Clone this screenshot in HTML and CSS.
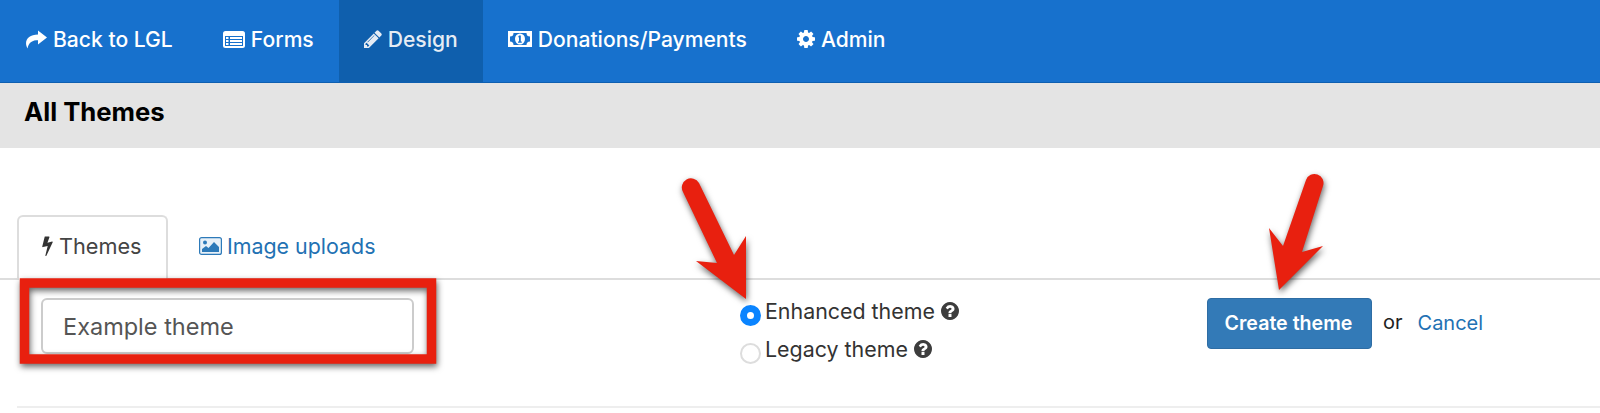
FILE: index.html
```html
<!DOCTYPE html>
<html lang="en">
<head>
    <meta charset="UTF-8">
    <title>All Themes</title>
    <link rel="stylesheet" href="styles.css">
</head>
<body>
    <nav class="topnav">
        <a class="nav-item" href="#">
            <svg class="nav-icon icon-share" viewBox="0 0 22 18"><path d="M13 0l9 7-9 7v-4.200C7.500 9.800 3.800 11.500 2.500 18-1.500 10.500 3 4.300 13 4z"/></svg>
            Back to LGL
        </a>
        <a class="nav-item" href="#">
            <svg class="nav-icon icon-wide" viewBox="0 0 22 17"><rect width="22" height="17" rx="2.500"/><path class="cut" d="M2 5h18v10H2z"/><path d="M3 6h2.500v2H3zM3 9h2.500v2H3zM3 12h2.500v2H3zM7 6h12v2H7zM7 9h12v2H7zM7 12h12v2H7z"/></svg>
            Forms
        </a>
        <a class="nav-item active" href="#">
            <svg class="nav-icon icon-square" viewBox="0 0 1536 1536"><path d="M363 1408l91-91-235-235-91 91v107h128v128h107zm523-928q0-22-22-22-10 0-17 7l-542 542q-7 7-7 17 0 22 22 22 10 0 17-7l542-542q7-7 7-17zm-54-192l416 416-832 832h-416v-416zm683 96q0 53-37 90l-166 166-416-416 166-165q36-38 90-38 53 0 91 38l235 234q37 39 37 91z"/></svg>
            Design
        </a>
        <a class="nav-item" href="#">
            <svg class="nav-icon icon-money" viewBox="0 0 24 16"><rect width="24" height="16"/><path class="cut" d="M2 2h20v12H2z"/><path d="M2 2h3.500A3.500 3.500 0 0 1 2 5.500zM22 2v3.500A3.500 3.500 0 0 1 18.500 2zM2 14v-3.500A3.500 3.500 0 0 1 5.500 14zM22 14h-3.500a3.500 3.500 0 0 1 3.500-3.500z"/><ellipse cx="12" cy="8" rx="5" ry="5.500"/><path class="cut" d="M11 4.500h1.800v6h1v1.200H10v-1.200h1V6.200h-1z"/></svg>
            Donations/Payments
        </a>
        <a class="nav-item" href="#">
            <svg class="nav-icon icon-square" viewBox="0 -128 1536 1536"><path d="M1024 640q0-106-75-181t-181-75-181 75-75 181 75 181 181 75 181-75 75-181zm512-109v222q0 12-8 23t-20 13l-185 28q-19 54-39 91 35 50 107 138 10 12 10 25t-9 23q-27 37-99 108t-94 71q-12 0-26-9l-138-108q-44 23-91 38-16 136-29 186-7 28-36 28h-222q-14 0-24.500-8.500t-11.500-21.500l-28-184q-49-16-90-37l-141 107q-10 9-25 9-14 0-25-11-126-114-165-168-7-10-7-23 0-12 8-23 15-21 51-66.500t54-70.500q-27-50-41-99l-183-27q-13-2-21-12.500t-8-23.500v-222q0-12 8-23t19-13l186-28q14-46 39-92-40-57-107-138-10-12-10-24 0-10 9-23 26-36 98.500-107.500t94.500-71.500q13 0 26 10l138 107q44-23 91-38 16-136 29-186 7-28 36-28h222q14 0 24.500 8.500t11.500 21.500l28 184q49 16 90 37l142-107q9-9 24-9 13 0 25 10 129 119 165 170 7 8 7 22 0 12-8 23-15 21-51 66.500t-54 70.500q26 50 41 98l183 28q13 2 21 12.500t8 23.500z"/></svg>
            Admin
        </a>
    </nav>

    <header class="page-title">
        <h1>All Themes</h1>
    </header>

    <main class="content">
        <div class="tabs">
            <a class="tab current" href="#">
                <svg class="tab-bolt" viewBox="0 0 1792 1792"><path d="M1333 566q18 20 7 44l-540 1157q-13 25-42 25-4 0-14-2-17-5-25.500-19t-4.500-30l197-808-406 101q-4 1-12 1-18 0-31-11-18-15-13-39l201-825q4-14 16-23t28-9h328q19 0 32 12.500t13 29.500q0 8-5 18l-171 463 396-98q8-2 12-2 19 0 34 15z"/></svg>
                Themes
            </a>
            <a class="tab" href="#">
                <svg class="tab-picture" viewBox="0 0 23 18"><rect x=".6" y=".6" width="21.800" height="16.800" rx="2" class="frame"/><circle cx="6" cy="5.500" r="2"/><path d="M3 15v-3l4-3 2.500 2L15 5l5 5v5z"/></svg>
                Image uploads
            </a>
        </div>

        <form class="theme-form">
            <input class="name-input" type="text" value="Example theme">
            <div class="theme-types">
                <label class="theme-type">
                    <input type="radio" name="kind" checked>
                    Enhanced theme
                    <svg class="help" viewBox="128 128 1536 1536"><path d="M1024 1376v-192q0-14-9-23t-23-9h-192q-14 0-23 9t-9 23v192q0 14 9 23t23 9h192q14 0 23-9t9-23zm256-672q0-88-55.500-163t-138.500-116-170-41q-243 0-371 213-15 24 8 42l132 100q7 6 19 6 16 0 25-12 53-68 86-92 34-24 86-24 48 0 85.500 26t37.500 59q0 38-20 61t-68 45q-63 28-115.500 86.500t-52.500 125.500v36q0 14 9 23t23 9h192q14 0 23-9t9-23q0-19 21.500-49.500t54.500-49.500q32-18 49-28.500t46-35 44.500-48 28-60.500 12.500-81zm384 192q0 209-103 385.500t-279.500 279.500-385.500 103-385.500-103-279.500-279.500-103-385.500 103-385.500 279.500-279.500 385.500-103 385.500 103 279.500 279.500 103 385.500z"/></svg>
                </label>
                <label class="theme-type">
                    <input type="radio" name="kind">
                    Legacy theme
                    <svg class="help" viewBox="128 128 1536 1536"><path d="M1024 1376v-192q0-14-9-23t-23-9h-192q-14 0-23 9t-9 23v192q0 14 9 23t23 9h192q14 0 23-9t9-23zm256-672q0-88-55.500-163t-138.500-116-170-41q-243 0-371 213-15 24 8 42l132 100q7 6 19 6 16 0 25-12 53-68 86-92 34-24 86-24 48 0 85.500 26t37.500 59q0 38-20 61t-68 45q-63 28-115.500 86.500t-52.500 125.500v36q0 14 9 23t23 9h192q14 0 23-9t9-23q0-19 21.500-49.500t54.500-49.500q32-18 49-28.500t46-35 44.500-48 28-60.500 12.500-81zm384 192q0 209-103 385.500t-279.500 279.500-385.500 103-385.500-103-279.500-279.500-103-385.500 103-385.500 279.500-279.500 385.500-103 385.500 103 279.500 279.500 103 385.500z"/></svg>
                </label>
            </div>
            <div class="actions">
                <button type="button">Create theme</button>
                <span class="or">or</span>
                <a class="cancel" href="#">Cancel</a>
            </div>
        </form>
    </main>

    <!-- red callouts drawn on top of the screenshot -->
    <svg class="callouts" viewBox="0 0 1600 413">
        <rect class="callout-box" x="24.500" y="283" width="407" height="76"/>
        <path class="callout-arrow" d="M683 192a9 9 0 0 1 16-9l35 72 12-19v63l-50-38 21 2z"/>
        <path class="callout-arrow" d="M1306 180a9 9 0 0 1 17 6l-21 66 21-6-44 44-10-62 14 18z"/>
    </svg>
</body>
</html>
```

FILE: styles.css
```css
* {
    box-sizing: border-box;
}
body {
    margin: 0;
    background: #fff;
    font-family: Inter, "Liberation Sans", sans-serif;
    color: #333;
    position: relative;
    height: 413px;
    overflow: hidden;
}

/* top bar */
.topnav {
    display: flex;
    height: 83px;
    background: #1771cd;
    border-bottom: 1px solid #0e5fb0;
}
.nav-item {
    display: flex;
    align-items: center;
    gap: 6px;
    padding: 0 25px 4px;
    color: #fff;
    font-size: 21.100px;
    font-weight: 500;
    text-decoration: none;
}
.nav-item.active {
    background: #0f5fad;
    color: #e6ecf4;
}
.nav-icon {
    fill: currentColor;
    flex: none;
}
.nav-icon .cut,
.icon-money .cut {
    fill: #1771cd;
}
.icon-share { width: 22px; height: 19px; }
.icon-wide { width: 22px; height: 17px; }
.icon-square { width: 18px; height: 18px; }
.icon-money { width: 24px; height: 16px; }

.page-title {
    height: 65px;
    background: #e4e4e4;
    padding: 14px 24px 0;
}
.page-title h1 {
    margin: 0;
    font-size: 25.700px;
    line-height: 29px;
    font-weight: 700;
    color: #000;
}

/* tabs */
.content {
    padding-top: 67px;
}
.tabs {
    display: flex;
    height: 65px;
    padding-left: 17px;
    border-bottom: 2px solid #ddd;
}
.tab {
    display: flex;
    align-items: center;
    gap: 5px;
    height: 65px;
    padding: 0 26px 6px 29px;
    font-size: 21.400px;
    color: #2271b3;
    text-decoration: none;
    border: 2px solid transparent;
    border-bottom: 0;
}
.tab.current {
    width: 151px;
    padding: 0 21px 6px;
    font-size: 21.700px;
    color: #444;
    background: #fff;
    border-color: #ddd;
    border-radius: 6px 6px 0 0;
}
.tab-bolt {
    width: 21px;
    height: 23px;
    fill: #333;
    margin: 0 -4px 0 -3px;
}
.tab-picture {
    width: 23px;
    height: 18px;
    fill: #2d7ab9;
}
.tab-picture .frame {
    fill: #e8f1f8;
    stroke: #2d7ab9;
    stroke-width: 1.200;
}

/* form row */
.theme-form {
    display: grid;
    grid-template-columns: 699px 467px auto;
    padding: 18px 0 0 41px;
    align-items: start;
}
.name-input {
    width: 373px;
    height: 56px;
    padding: 0 20px;
    font: 400 23.500px Inter, "Liberation Sans", sans-serif;
    color: #555;
    border: 2px solid #ccc;
    border-radius: 6px;
    outline: none;
}
.theme-types {
    display: flex;
    flex-direction: column;
    gap: 10px;
}
.theme-type {
    display: flex;
    align-items: center;
    height: 28px;
    padding-bottom: 2px;
    font-size: 21.400px;
    color: #333;
    gap: 4px;
}
.theme-type input {
    appearance: none;
    width: 21px;
    height: 21px;
    margin: 8px 0 0;
    border: 2px solid #ddd;
    border-radius: 50%;
    background: #fff;
    flex: none;
}
.theme-type input:checked {
    border: 7px solid #0a84ff;
}
.help {
    width: 18px;
    height: 18px;
    fill: #3d3d3d;
    margin-left: 2px;
}

.actions {
    display: flex;
    align-items: center;
    height: 51px;
}
.actions button {
    height: 51px;
    width: 165px;
    padding: 0 2px 2px 0;
    font: 600 19.600px Inter, "Liberation Sans", sans-serif;
    color: #fff;
    background: #337ab7;
    border: 1px solid #2e6da4;
    border-radius: 4px;
}
.or {
    margin-left: 11px;
    font-size: 20px;
    color: #222;
    position: relative;
    top: -2px;
}
.cancel {
    margin-left: 15px;
    font-size: 20px;
    color: #2271b3;
    text-decoration: none;
    position: relative;
    top: -1px;
}

/* rule under the form */
.content::after {
    content: "";
    display: block;
    height: 2px;
    margin: 42px 0 0 17px;
    background: #eee;
}

.callouts {
    position: absolute;
    left: 0;
    top: 0;
    width: 1600px;
    height: 413px;
    pointer-events: none;
    filter: drop-shadow(1px 3px 3px rgba(0, 0, 0, .6));
}
.callout-box {
    fill: none;
    stroke: #e8200f;
    stroke-width: 9.500;
}
.callout-arrow {
    fill: #e8200f;
}
```
